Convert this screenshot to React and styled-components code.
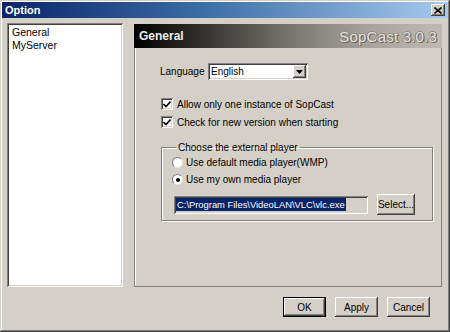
import React from 'react';
import styled, { createGlobalStyle, css } from 'styled-components';

const GlobalStyle = createGlobalStyle`
  html, body {
    margin: 0;
    padding: 0;
    background: #d4d0c8;
  }
  body {
    font-family: "Liberation Sans", Arial, sans-serif;
    font-size: 10px;
    color: #000;
  }
  * { box-sizing: border-box; }
`;

const raised = css`
  box-shadow: inset -1px -1px #404040, inset 1px 1px #ffffff,
    inset -2px -2px #808080, inset 2px 2px #d4d0c8;
`;

const sunken = css`
  box-shadow: inset 1px 1px #808080, inset -1px -1px #ffffff,
    inset 2px 2px #404040, inset -2px -2px #d4d0c8;
`;

const Window = styled.div`
  width: 450px;
  height: 332px;
  padding: 2px;
  background: #d4d0c8;
  display: flex;
  flex-direction: column;
  box-shadow: inset -1px -1px #404040, inset 1px 1px #d4d0c8,
    inset -2px -2px #808080, inset 2px 2px #ffffff;
`;

const TitleBar = styled.div`
  height: 16px;
  display: flex;
  align-items: center;
  justify-content: space-between;
  padding: 0 3px 0 3px;
  background: linear-gradient(to right, #0a246a 0%, #3a6ea5 45%, #a6caf0 100%);
  color: #fff;
  font-weight: bold;
  font-size: 11px;
`;

const CloseButton = styled.div`
  width: 14px;
  height: 12px;
  background: #d4d0c8;
  display: flex;
  align-items: center;
  justify-content: center;
  ${raised};
`;

const Main = styled.div`
  display: flex;
  align-items: flex-start;
  padding: 5px 6px 0 5px;
  gap: 11px;
`;

const List = styled.div`
  width: 116px;
  height: 264px;
  background: #fff;
  padding: 3px 5px;
  ${sunken};
`;

const ListItem = styled.div`
  line-height: 13px;
  font-size: 10.5px;
`;

const Panel = styled.div`
  margin-top: 1px;
  width: 308px;
  height: 263px;
  display: flex;
  flex-direction: column;
`;

const Header = styled.div`
  height: 24px;
  flex: none;
  display: flex;
  align-items: center;
  justify-content: space-between;
  padding: 0 5px 0 5px;
  background: linear-gradient(to right, #000000 0%, #2e2c2a 20%, #77746e 50%, #a6a29b 75%, #bfbbb3 100%);
`;

const HeaderTitle = styled.span`
  font-weight: bold;
  font-size: 12px;
  color: #ebebeb;
`;

const Brand = styled.span`
  font-size: 15px;
  color: #e6e3dd;
  letter-spacing: 0.2px;
  text-shadow: 1px 1px 0 #6c6863, -1px 0 0 #85817b, 0 -1px 0 #918d87, 1px 0 0 #7b7771;
`;

const Content = styled.div`
  flex: 1;
  border: 1px solid #808080;
  border-top: none;
  box-shadow: inset 1px 0 #ffffff;
  padding: 15px 0 0 26px;
  display: flex;
  flex-direction: column;
`;

const Row = styled.div`
  display: flex;
  align-items: center;
  gap: ${({ $gap }) => $gap ?? 5}px;
  margin-top: ${({ $top }) => $top ?? 0}px;
  margin-left: ${({ $left }) => $left ?? 0}px;
`;

const Label = styled.span`
  flex: none;
  width: ${({ $w }) => ($w ? `${$w}px` : 'auto')};
  white-space: nowrap;
`;

const Combo = styled.div`
  width: 100px;
  height: 17px;
  background: #fff;
  display: flex;
  align-items: center;
  justify-content: space-between;
  padding: 2px 2px 2px 3px;
  ${sunken};
`;

const ComboArrow = styled.div`
  width: 13px;
  height: 13px;
  background: #d4d0c8;
  display: flex;
  align-items: center;
  justify-content: center;
  ${raised};
`;

const CheckBox = styled.div`
  width: 12px;
  height: 12px;
  flex: none;
  background: #fff;
  display: flex;
  align-items: center;
  justify-content: center;
  ${sunken};
`;

const Group = styled.fieldset`
  margin: 13px 0 0 0;
  width: 272px;
  height: 80px;
  padding: 3px 0 0 10px;
  border: 1px solid #808080;
  box-shadow: 1px 1px 0 #ffffff, inset 1px 1px 0 #ffffff;
  display: flex;
  flex-direction: column;
`;

const Legend = styled.legend`
  padding: 0 2px;
  margin-left: 4px;
  line-height: 13px;
`;

const Radio = styled.div`
  width: 11px;
  height: 11px;
  flex: none;
  border-radius: 50%;
  background: #fff;
  border: 1px solid #808080;
  border-right-color: #e8e6e2;
  border-bottom-color: #e8e6e2;
  display: flex;
  align-items: center;
  justify-content: center;
  &::after {
    content: '';
    width: 4px;
    height: 4px;
    border-radius: 50%;
    background: ${({ $checked }) => ($checked ? '#000' : 'transparent')};
  }
`;

const PathField = styled.div`
  width: 194px;
  height: 18px;
  background: #d4d0c8;
  display: flex;
  align-items: center;
  padding: 0 2px;
  ${sunken};
`;

const Selected = styled.span`
  background: #0a246a;
  color: #fff;
  line-height: 13px;
  padding: 0 1px;
  font-size: 9.4px;
  white-space: nowrap;
`;

const Button = styled.div`
  width: ${({ $w }) => $w}px;
  height: ${({ $h }) => $h}px;
  flex: none;
  display: flex;
  align-items: center;
  justify-content: center;
  background: #d4d0c8;
  ${({ $default }) =>
    $default
      ? css`
          border: 1px solid #000;
          box-shadow: inset -1px -1px #404040, inset 1px 1px #ffffff,
            inset -2px -2px #808080;
        `
      : raised};
`;

const Footer = styled.div`
  display: flex;
  justify-content: flex-end;
  gap: 9px;
  padding: 10px 18px 0 0;
`;

const CheckMark = () => (
  <svg width="8" height="7" viewBox="0 0 8 7">
    <path d="M0.5 3 L3 5.5 L7.5 0.5" stroke="#000" strokeWidth="1.6" fill="none" />
  </svg>
);

export default function App() {
  return (
    <>
      <GlobalStyle />
      <Window>
        <TitleBar>
          <span>Option</span>
          <CloseButton>
            <svg width="8" height="7" viewBox="0 0 8 7">
              <path d="M0.5 0.5 L7.5 6.5 M7.5 0.5 L0.5 6.5" stroke="#000" strokeWidth="1.6" />
            </svg>
          </CloseButton>
        </TitleBar>
        <Main>
          <List>
            <ListItem>General</ListItem>
            <ListItem>MyServer</ListItem>
          </List>
          <Panel>
            <Header>
              <HeaderTitle>General</HeaderTitle>
              <Brand>SopCast 3.0.3</Brand>
            </Header>
            <Content>
              <Row $gap={0} $left={-1}>
                <Label $w={48}>Language</Label>
                <Combo>
                  <span>English</span>
                  <ComboArrow>
                    <svg width="7" height="4" viewBox="0 0 7 4">
                      <path d="M0 0 H7 L3.5 4 Z" fill="#000" />
                    </svg>
                  </ComboArrow>
                </Combo>
              </Row>
              <Row $top={18} $gap={4}>
                <CheckBox><CheckMark /></CheckBox>
                <Label>Allow only one instance of SopCast</Label>
              </Row>
              <Row $top={6} $gap={4}>
                <CheckBox><CheckMark /></CheckBox>
                <Label>Check for new version when starting</Label>
              </Row>
              <Group>
                <Legend>Choose the external player</Legend>
                <Row $gap={3}>
                  <Radio />
                  <Label>Use default media player(WMP)</Label>
                </Row>
                <Row $top={6} $gap={3}>
                  <Radio $checked />
                  <Label>Use my own media player</Label>
                </Row>
                <Row $top={9} $gap={9} $left={2}>
                  <PathField>
                    <Selected>C:\Program Files\VideoLAN\VLC\vlc.exe</Selected>
                  </PathField>
                  <Button $w={38} $h={21}>Select...</Button>
                </Row>
              </Group>
            </Content>
          </Panel>
        </Main>
        <Footer>
          <Button $w={43} $h={20} $default>OK</Button>
          <Button $w={43} $h={20}>Apply</Button>
          <Button $w={43} $h={20}>Cancel</Button>
        </Footer>
      </Window>
    </>
  );
}
